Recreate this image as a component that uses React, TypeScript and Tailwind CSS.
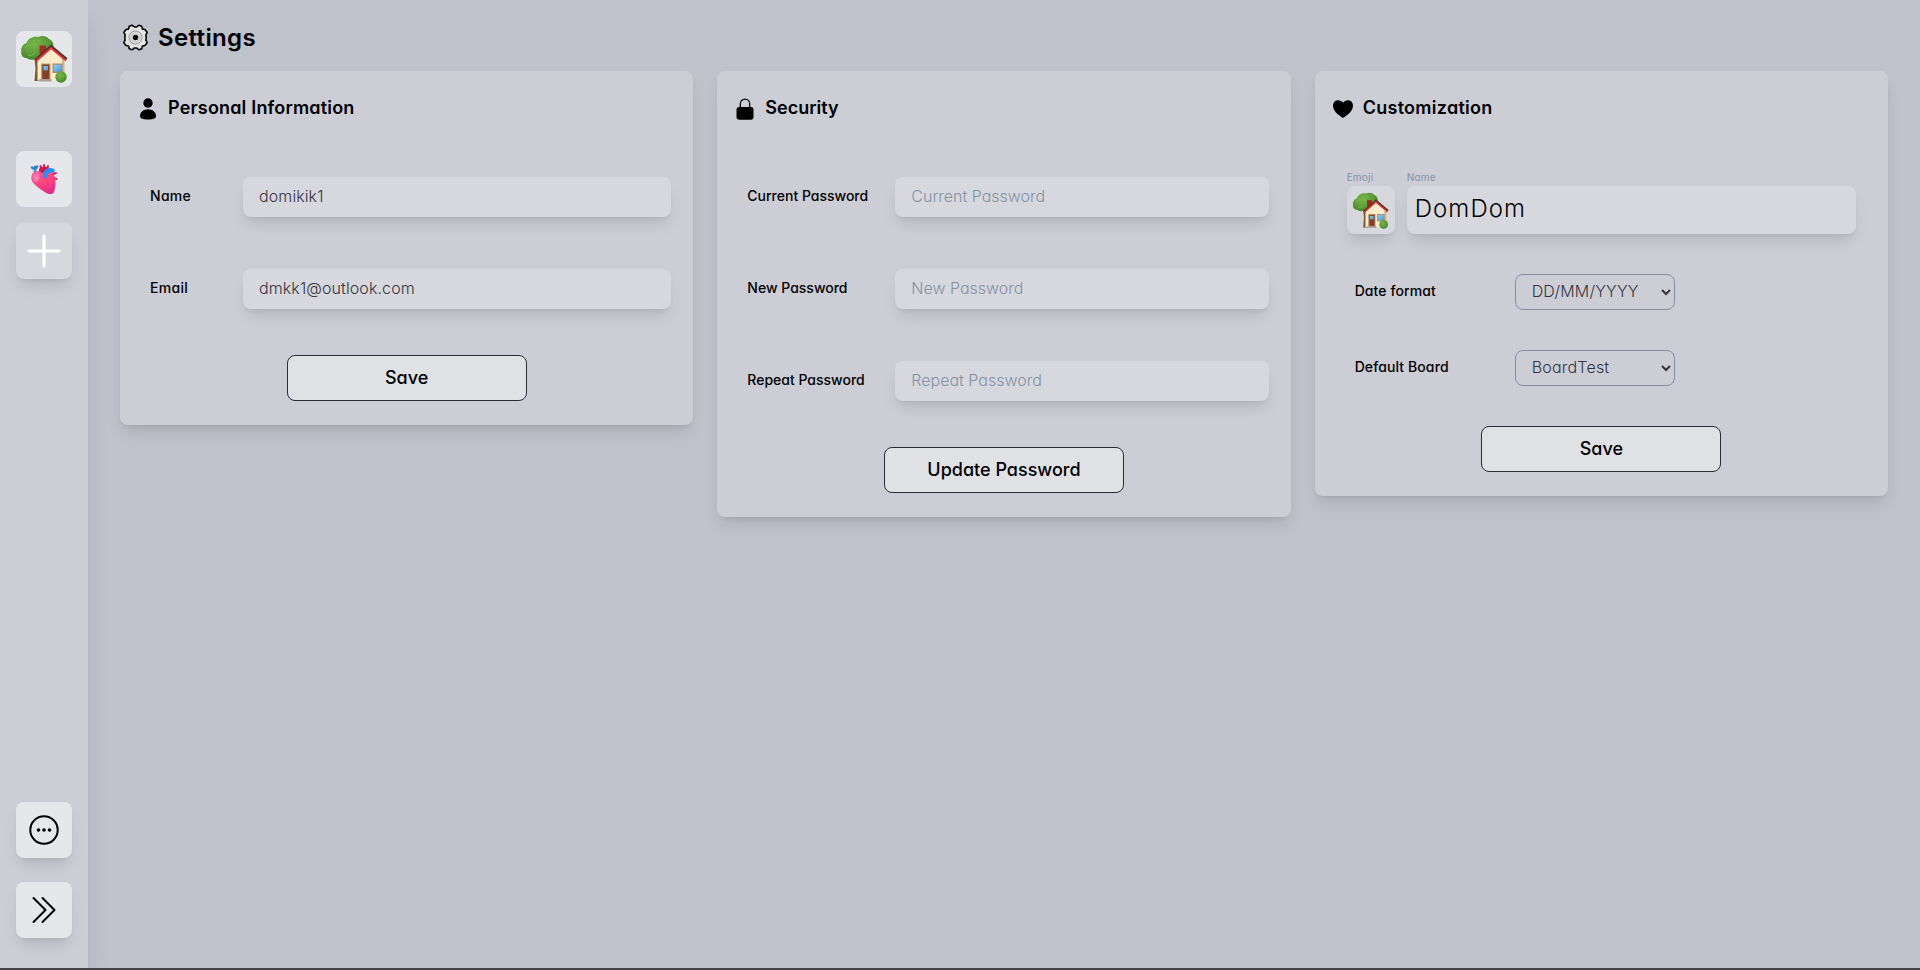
import type { ReactNode } from "react";

function HouseIcon({ className }: { className: string }) {
  return (
    <svg viewBox="0 0 48 48" className={className} aria-hidden="true">
      <defs>
        <radialGradient id="leaf" cx="0.4" cy="0.35" r="0.7">
          <stop offset="0" stopColor="#78b44a" />
          <stop offset="0.7" stopColor="#569733" />
          <stop offset="1" stopColor="#427c26" />
        </radialGradient>
        <linearGradient id="pane" x1="0" y1="0" x2="1" y2="1">
          <stop offset="0" stopColor="#8fd0f5" />
          <stop offset="1" stopColor="#4a9bd8" />
        </linearGradient>
      </defs>
      <path d="M14 20h5l1 26h-5.500l1-13z" fill="#7c5a30" />
      <path d="M1.500 18C0 13 3 9 6.500 8 8 3 14 1 18 2c4-2 9-1 11 2 3 1 4.500 4 4.500 7 1 3-2 6-4 7-3 4-7 5-11 4.500-3 3-9 3-12 .5-3 0-5-2-5.500-5z" fill="url(#leaf)" />
      <path d="M5 13c2-3 5-3 7-2M13 6c3-2 6-1 8 1M8 20c3 1 5 0 7-2" fill="none" stroke="#8ac45c" strokeWidth="1" opacity=".6" />
      <path d="M19.500 10.500h6.500V19h-6.500z" fill="#a52c24" />
      <path d="M31 12.500 17.500 25v20.500h27V25z" fill="#fbebc8" />
      <path d="M42 24h2.500v21H42z" fill="#cdb590" />
      <path d="M15.500 25.500 31 11.500l15.500 13" fill="none" stroke="#52302a" strokeWidth="3.200" />
      <path d="M16 26 31 13l15 12.500" fill="none" stroke="#db3838" strokeWidth="1.900" />
      <path d="M21 28.500h9.500V45H21z" fill="#ba9d78" />
      <path d="M22.300 29.500h7V45h-7z" fill="#843e25" />
      <path d="M23.500 31h4.500v4.500h-4.500z" fill="url(#pane)" />
      <path d="M32.500 28.500h10v9.500h-10z" fill="#a98e6c" />
      <path d="M33.800 29.800h7.400v6.700h-7.400z" fill="url(#pane)" />
      <path d="M19.500 44h12v2.500h-12z" fill="#aaa096" />
      <circle cx="41" cy="42" r="5.700" fill="url(#leaf)" />
    </svg>
  );
}

function HeartOrganIcon() {
  return (
    <svg viewBox="0 0 28 32" className="h-8 w-7" aria-hidden="true">
      <defs>
        <linearGradient id="muscle" x1="0.2" y1="0" x2="0.7" y2="1">
          <stop offset="0" stopColor="#f85c9c" />
          <stop offset="0.55" stopColor="#fb437c" />
          <stop offset="1" stopColor="#e02b8c" />
        </linearGradient>
        <radialGradient id="atrium" cx="0.6" cy="0.6" r="0.6">
          <stop offset="0" stopColor="#fb87bd" />
          <stop offset="1" stopColor="#f25a97" />
        </radialGradient>
      </defs>
      <path d="M5 8.500V4M2 4.500 5 6.500l2-3" fill="none" stroke="#2b85cf" strokeWidth="2.600" strokeLinecap="round" />
      <path d="M11.500 9 10.500 3M14 8V2M17 8l1-5M21 12l5-2M23 15l3.500 1" fill="none" stroke="#d91f56" strokeWidth="2" strokeLinecap="round" />
      <path d="M9 6c4-4 10-3 11 2l-4 6-7-1z" fill="#cf194e" />
      <path d="M2 12c2-5 8-5 10-2 5-1 11-1 13 4 1 6 .5 12-1.500 16-2 2-6 1-9-1C9 25 4 22 2 18c-.8-2-.8-4 0-6z" fill="url(#muscle)" />
      <path d="M1.500 14C2 9 6 7 9 9c2 2 1 7-1.500 10-3 1-6-2-6-5z" fill="url(#atrium)" />
      <path d="M15 13c0-4.500 3.500-6.500 7.500-5.300" fill="none" stroke="#2c8ff0" strokeWidth="4.600" strokeLinecap="round" />
    </svg>
  );
}

function GearIcon() {
  return (
    <svg viewBox="0 0 26 26" className="size-[27px]" aria-hidden="true">
      <path
        d="M9.600 1.200c.9 0 1.500 1.500 2.400 1.600h2c.9-.1 1.500-1.600 2.400-1.600l2.600.9c.6.600.1 2 .7 2.600s2 .1 2.600.8l1.900 2.500c.3.900-1.100 1.500-1.200 2.400l.2 1.700v2l-.2 1.500c.1.900 1.500 1.500 1.200 2.400l-1.900 2.500c-.6.700-2 .2-2.600.8s-.1 2-.7 2.600l-2.600.9c-.9 0-1.500-1.500-2.400-1.600h-2c-.9.100-1.500 1.600-2.400 1.600L7 23.900c-.6-.6-.1-2-.7-2.600s-2-.1-2.600-.8L1.800 18c-.3-.9 1.100-1.500 1.200-2.400L2.800 14v-2L3 10.400C2.900 9.500 1.500 8.900 1.800 8l1.900-2.500c.6-.7 2-.2 2.600-.8s.1-2 .7-2.600z"
        fill="#e4e4e4"
        stroke="#000"
        strokeWidth="1.500"
        strokeLinejoin="round"
      />
      <circle cx="13" cy="13" r="6.300" fill="#dadada" stroke="#888" strokeWidth=".8" />
      <circle cx="13" cy="13" r="4.300" fill="#dedede" stroke="#b4b4b4" strokeWidth=".5" />
      <circle cx="13" cy="13" r="2.600" fill="#000" />
    </svg>
  );
}

function PersonIcon() {
  return (
    <svg viewBox="0 0 16 22" className="h-[22px] w-4" aria-hidden="true">
      <circle cx="8" cy="5" r="4.700" />
      <path d="M0 18.200C0 14 3.500 11.200 8 11.200s8 2.800 8 7c0 2-3.200 3.300-8 3.300s-8-1.300-8-3.300z" />
    </svg>
  );
}

function LockIcon() {
  return (
    <svg viewBox="0 0 18 22" className="h-[22px] w-[18px]" aria-hidden="true">
      <path d="M4.300 10V5.800a4.700 4.700 0 0 1 9.400 0V10" fill="none" stroke="#000" strokeWidth="1.300" />
      <rect x=".5" y="9" width="17" height="12.700" rx="2.700" />
    </svg>
  );
}

function HeartIcon() {
  return (
    <svg viewBox="0 0 20 18" className="h-[18px] w-5" aria-hidden="true">
      <path d="M10 18C8.500 16.900 0 12.300 0 5.500 0 2.400 2.300.2 5 .2c2.100 0 4 1 5 2.600C11 1.200 12.900.2 15 .2c2.700 0 5 2.200 5 5.300 0 6.800-8.500 11.400-10 12.500z" />
    </svg>
  );
}

function Sidebar() {
  return (
    <aside className="z-10 flex w-[88px] shrink-0 flex-col items-center bg-[#cdcdd6] pt-[31px] pb-[30px] shadow-xl">
      <button className="flex size-14 items-center justify-center rounded-lg bg-[#e5e7eb]">
        <HouseIcon className="size-12" />
      </button>
      <button className="mt-16 flex size-14 items-center justify-center rounded-lg bg-[#e5e7eb]">
        <HeartOrganIcon />
      </button>
      <button className="mt-4 flex size-14 items-center justify-center rounded-lg bg-[#d7d8dd] shadow-lg">
        <svg viewBox="0 0 34 34" className="size-[34px]" stroke="#fff" strokeWidth="3.200" strokeLinecap="round">
          <path d="M17 2v30M2 17h30" />
        </svg>
      </button>
      <button className="mt-auto flex size-14 items-center justify-center rounded-lg bg-[#e5e7eb] shadow-lg">
        <svg viewBox="0 0 32 32" className="size-8" fill="none" stroke="#000" strokeWidth="2">
          <circle cx="16" cy="16" r="13.700" />
          <g fill="#000" stroke="none">
            <circle cx="10.500" cy="16" r="1.800" />
            <circle cx="16" cy="16" r="1.800" />
            <circle cx="21.500" cy="16" r="1.800" />
          </g>
        </svg>
      </button>
      <button className="mt-6 flex size-14 items-center justify-center rounded-lg bg-[#e5e7eb] shadow-lg">
        <svg viewBox="0 0 32 32" className="size-8" fill="none" stroke="#000" strokeWidth="2" strokeLinecap="round" strokeLinejoin="round">
          <path d="m5.500 4 12 12-12 12M14.500 4l12 12-12 12" />
        </svg>
      </button>
    </aside>
  );
}

function Card({ icon, title, titleClass, children }: {
  icon: ReactNode;
  title: string;
  titleClass: string;
  children: ReactNode;
}) {
  return (
    <section className="flex flex-col items-center rounded-lg bg-[#cdcdd6] pb-6 shadow-lg">
      <header className="flex h-[74px] w-full items-center pl-4">
        <span className="flex w-6 justify-center pt-0.5">{icon}</span>
        <h2 className={titleClass}>{title}</h2>
      </header>
      {children}
    </section>
  );
}

function Field({ label, labelClass, value, placeholder, type = "text" }: {
  label: string;
  labelClass: string;
  value?: string;
  placeholder?: string;
  type?: string;
}) {
  return (
    <label className="flex h-10 w-full items-center pr-[22px] pl-[30px]">
      <span className={labelClass}>{label}</span>
      <input
        type={type}
        defaultValue={value}
        placeholder={placeholder}
        className="h-10 min-w-0 flex-1 rounded-lg bg-[#d7d8dd] px-4 pb-0.5 font-light tracking-[0.1px] text-[#343440] shadow-lg placeholder:tracking-normal placeholder:text-[#8492a6]"
      />
    </label>
  );
}

function SelectRow({ label, option }: { label: string; option: string }) {
  return (
    <label className="flex w-full items-center pl-10">
      <span className="w-40 pb-0.5 text-sm font-medium tracking-[0.1px]">{label}</span>
      <select className="h-9 w-40 rounded-lg border border-[#8390a6] bg-[#cdcdd6] pb-0.5 pl-3 font-light tracking-[0.2px] text-[#343440]">
        <option>{option}</option>
      </select>
    </label>
  );
}

function ActionButton({ children }: { children: string }) {
  return (
    <button className="h-[46px] w-60 rounded-lg border border-[#2b2b38] bg-[#e0e1e5] pb-px text-lg font-medium">
      {children}
    </button>
  );
}

export default function App() {
  return (
    <div className="flex h-[970px] flex-col bg-[#bfc2cb] font-['Inter',sans-serif] text-black [font-feature-settings:'cv11']">
      <div className="flex min-h-0 flex-1">
        <Sidebar />
        <main className="flex-1 px-8">
          <div className="flex h-[71px] items-center gap-[9px] pt-1 pl-[2px]">
            <GearIcon />
            <h1 className="text-2xl font-semibold tracking-[0.35px]">Settings</h1>
          </div>
          <div className="grid grid-cols-3 items-start gap-6">
            <Card icon={<PersonIcon />} title="Personal Information" titleClass="pl-2 text-lg font-semibold tracking-[0.18px]">
              <div className="mt-8 mb-[46px] flex w-full flex-col gap-[52px]">
                <Field label="Name" labelClass="w-[93px] pb-0.5 text-sm font-medium tracking-[0.3px]" value="domikik1" />
                <Field label="Email" labelClass="w-[93px] pb-0.5 text-sm font-medium tracking-[0.3px]" value="dmkk1@outlook.com" />
              </div>
              <ActionButton>Save</ActionButton>
            </Card>
            <Card icon={<LockIcon />} title="Security" titleClass="pl-2 text-lg font-semibold">
              <div className="mt-8 mb-[46px] flex w-full flex-col gap-[52px]">
                <Field label="Current Password" labelClass="w-[148px] pb-0.5 text-sm font-medium" placeholder="Current Password" type="password" />
                <Field label="New Password" labelClass="w-[148px] pb-0.5 text-sm font-medium" placeholder="New Password" type="password" />
                <Field label="Repeat Password" labelClass="w-[148px] pb-0.5 text-sm font-medium" placeholder="Repeat Password" type="password" />
              </div>
              <ActionButton>Update Password</ActionButton>
            </Card>
            <Card icon={<HeartIcon />} title="Customization" titleClass="pl-2 text-lg font-semibold tracking-[0.27px]">
              <div className="mt-6 flex w-full gap-3 px-8">
                <div className="w-12">
                  <p className="h-[17px] text-[10px] leading-4 tracking-[0.2px] text-[#8492a6]">Emoji</p>
                  <div className="flex size-12 items-center justify-center rounded-lg bg-[#d7d8dd] shadow-lg">
                    <HouseIcon className="size-[37px]" />
                  </div>
                </div>
                <label className="flex-1">
                  <span className="block h-[17px] text-[10px] leading-4 tracking-[0.2px] text-[#8492a6]">Name</span>
                  <input defaultValue="DomDom" className="block h-12 w-full rounded-lg bg-[#d7d8dd] px-2 pb-1 text-2xl font-light tracking-[1.1px] shadow-lg" />
                </label>
              </div>
              <div className="my-10 flex w-full flex-col gap-10">
                <SelectRow label="Date format" option="DD/MM/YYYY" />
                <SelectRow label="Default Board" option="BoardTest" />
              </div>
              <ActionButton>Save</ActionButton>
            </Card>
          </div>
        </main>
      </div>
      <div className="z-20 h-0.5 bg-[#444446]" />
    </div>
  );
}
